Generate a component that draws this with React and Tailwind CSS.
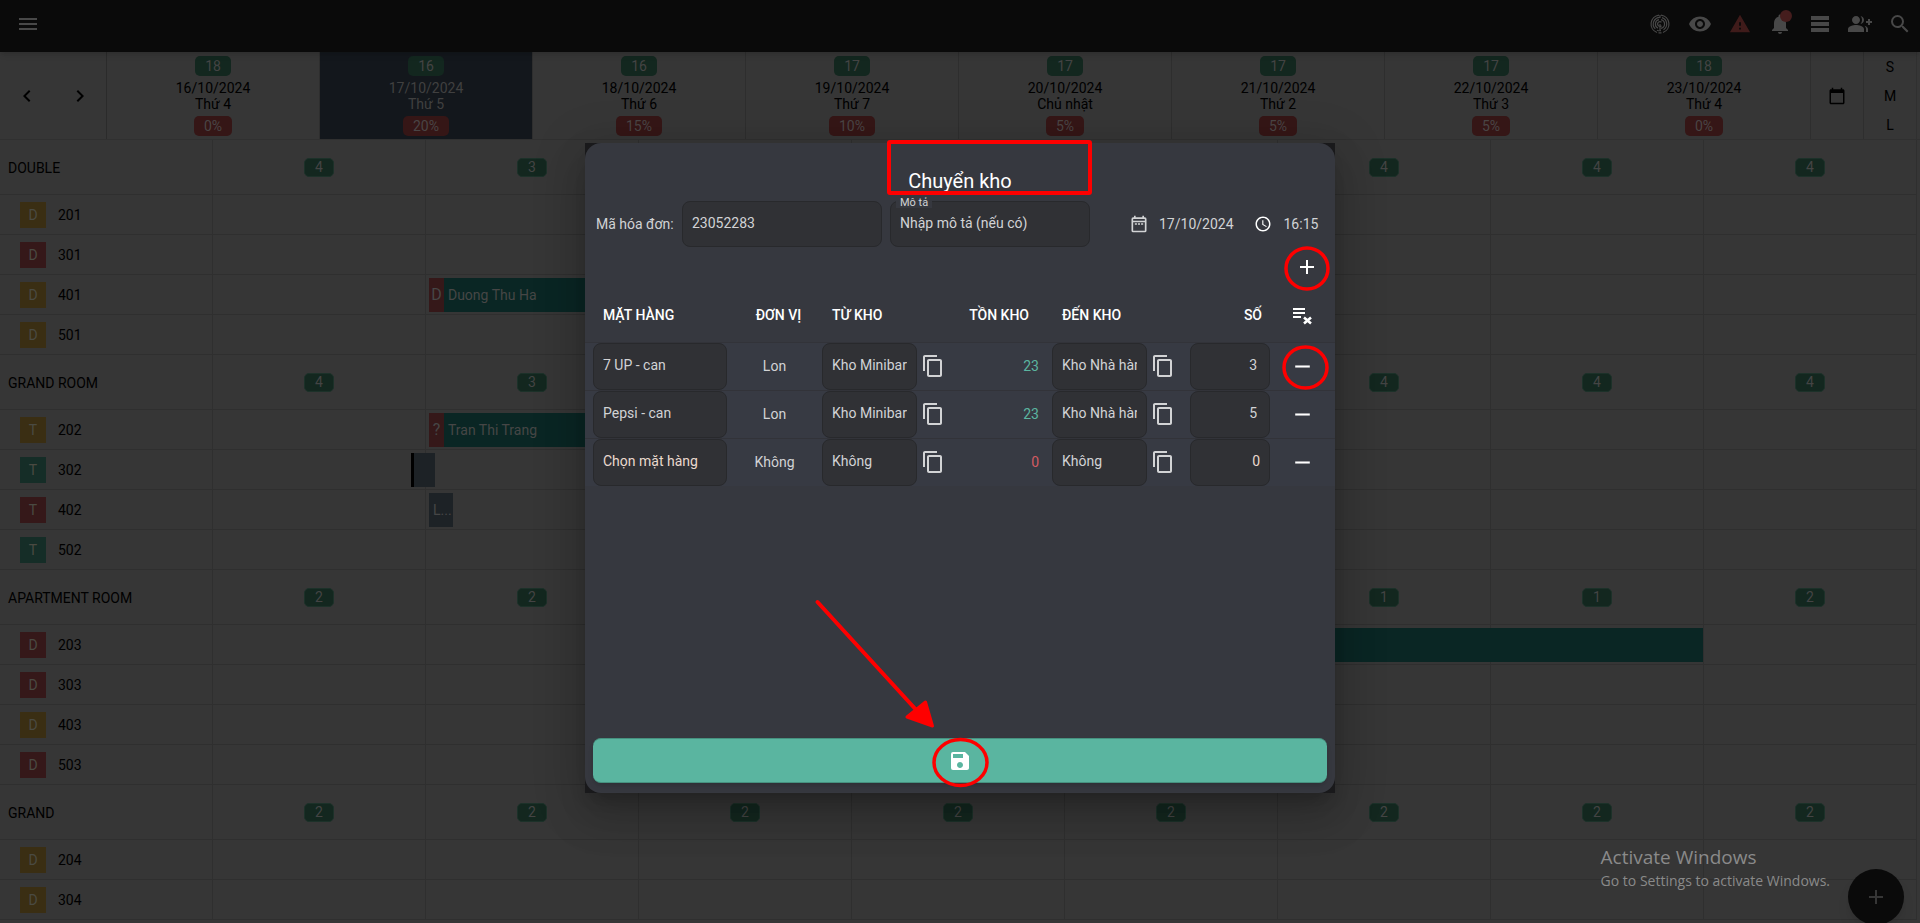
import { useState } from 'react';
import {
  MdAccessTime,
  MdAdd,
  MdCalendarToday,
  MdChevronLeft,
  MdChevronRight,
  MdContentCopy,
  MdGroupAdd,
  MdMenu,
  MdNotifications,
  MdRemove,
  MdSave,
  MdSearch,
  MdVisibility,
  MdWarning
} from 'react-icons/md';

const DAYS = [
  { date: '16/10/2024', name: 'Thứ 4', free: 18, rate: '0%' },
  { date: '17/10/2024', name: 'Thứ 5', free: 16, rate: '20%', today: true },
  { date: '18/10/2024', name: 'Thứ 6', free: 16, rate: '15%' },
  { date: '19/10/2024', name: 'Thứ 7', free: 17, rate: '10%' },
  { date: '20/10/2024', name: 'Chủ nhật', free: 17, rate: '5%' },
  { date: '21/10/2024', name: 'Thứ 2', free: 17, rate: '5%' },
  { date: '22/10/2024', name: 'Thứ 3', free: 17, rate: '5%' },
  { date: '23/10/2024', name: 'Thứ 4', free: 18, rate: '0%' }
];

// start / end are counted in days from the first column
const GROUPS = [
  {
    name: 'DOUBLE',
    free: [4, 3, null, null, null, 4, 4, 4],
    rooms: [
      { no: '201', tag: 'D', color: 'yellow' },
      { no: '301', tag: 'D', color: 'red' },
      { no: '401', tag: 'D', color: 'yellow', booking: { kind: 'stay', tag: 'D', guest: 'Duong Thu Ha', start: 1.014, end: 2.5 } },
      { no: '501', tag: 'D', color: 'yellow' }
    ]
  },
  {
    name: 'GRAND ROOM',
    free: [4, 3, null, null, null, 4, 4, 4],
    rooms: [
      { no: '202', tag: 'T', color: 'yellow', booking: { kind: 'stay', tag: '?', guest: 'Tran Thi Trang', start: 1.014, end: 2.5 } },
      { no: '302', tag: 'T', color: 'green', booking: { kind: 'late', start: 0.93, end: 1.042 } },
      { no: '402', tag: 'T', color: 'red', booking: { kind: 'done', guest: 'L...', start: 1.014, end: 1.127 } },
      { no: '502', tag: 'T', color: 'green' }
    ]
  },
  {
    name: 'APARTMENT ROOM',
    free: [2, 2, null, null, null, 1, 1, 2],
    rooms: [
      { no: '203', tag: 'D', color: 'red', booking: { kind: 'stay', start: 3, end: 6.995 } },
      { no: '303', tag: 'D', color: 'red' },
      { no: '403', tag: 'D', color: 'yellow' },
      { no: '503', tag: 'D', color: 'red' }
    ]
  },
  {
    name: 'GRAND',
    free: [2, 2, 2, 2, 2, 2, 2, 2],
    rooms: [
      { no: '204', tag: 'D', color: 'yellow' },
      { no: '304', tag: 'D', color: 'yellow' }
    ]
  }
];

const TAG_COLORS = {
  yellow: 'bg-[#3a2e13]',
  red: 'bg-[#351819]',
  green: 'bg-[#152d27]'
};

const BOOKING_COLORS = {
  stay: 'bg-[#0a2624]',
  late: 'bg-[#1d2226] border-l-3 border-black',
  done: 'bg-[#1d2226]'
};

function FingerprintIcon() {
  return (
    <svg viewBox="0 0 24 24" className="h-6 w-6" fill="none" stroke="currentColor" strokeWidth="1.2">
      <path d="M11 3.100a9 9 0 0 0-2 17.400M13 3.100a9 9 0 0 1 2 17.400M10.500 20.900h3" />
      <path d="M12 5.300a6.700 6.700 0 0 0-4.700 11.500M14 5.600a6.700 6.700 0 0 1 1.500 12.100M9 18.200a6.700 6.700 0 0 0 4 .4" />
      <path d="M11 7.600a4.500 4.500 0 0 0-1 8.500M13 7.600a4.500 4.500 0 0 1 0 8.800" />
      <path d="M13.500 10.300a2.300 2.300 0 1 0 0 3.400M12 3v3M12 12v6.500" />
    </svg>
  );
}

function ViewListIcon() {
  return (
    <svg viewBox="0 0 24 24" className="h-6 w-6" fill="currentColor">
      <path d="M3 4h18v4H3zM3 10h18v4H3zM3 16h18v4H3z" />
    </svg>
  );
}

function CalendarIcon() {
  return (
    <svg viewBox="0 0 24 24" className="h-5 w-5 shrink-0" fill="currentColor">
      <path d="M19 4h-1V2h-2v2H8V2H6v2H5a2 2 0 0 0-2 2v14a2 2 0 0 0 2 2h14a2 2 0 0 0 2-2V6a2 2 0 0 0-2-2zm0 16H5V10h14v10zm0-12H5V6h14v2zM7 11h2.500v2H7zM10.700 11h2.500v2h-2.500zM14.500 11H17v2h-2.500z" />
    </svg>
  );
}

function ClearListIcon() {
  return (
    <svg viewBox="0 0 24 24" className="h-6 w-6" fill="none" stroke="currentColor" strokeWidth="2">
      <path d="M3 6h12M3 10h12M3 14h8" />
      <path d="M14 14.500l7 6M21 14.500l-7 6" strokeWidth="2.600" />
    </svg>
  );
}

function TopBar() {
  return (
    <header className="relative z-10 flex h-13 items-center justify-between bg-[#0a0a0a] pr-2 pb-1 pl-4 text-[#484848] shadow-md">
      <button aria-label="Menu">
        <MdMenu size={24} />
      </button>
      <div className="flex items-center gap-4">
        <button aria-label="Vân tay"><FingerprintIcon /></button>
        <button aria-label="Xem"><MdVisibility size={24} /></button>
        <button aria-label="Cảnh báo" className="text-[#3f1b1a]"><MdWarning size={22} className="mx-px" /></button>
        <button aria-label="Thông báo" className="relative">
          <MdNotifications size={24} />
          <span className="absolute -top-0.5 right-0 h-3 w-3 rounded-full bg-[#451d1d]" />
        </button>
        <button aria-label="Danh sách"><ViewListIcon /></button>
        <button aria-label="Thêm khách"><MdGroupAdd size={24} /></button>
        <button aria-label="Tìm kiếm"><MdSearch size={24} /></button>
      </div>
    </header>
  );
}

function DateHeader() {
  return (
    <div className="flex border-b border-[#303030] pr-[3px]">
      <div className="flex w-[107px] shrink-0 items-center justify-around border-r border-[#2b2b2b] text-black">
        <button aria-label="Ngày trước"><MdChevronLeft size={24} /></button>
        <button aria-label="Ngày sau"><MdChevronRight size={24} /></button>
      </div>
      {DAYS.map(day => (
        <div
          key={day.date}
          className={`flex min-w-0 flex-1 flex-col items-center border-r border-[#2e2e2e] pt-1 pb-[3px] leading-4 ${
            day.today ? 'bg-[#13171c] text-[#404040]' : 'text-black'
          }`}
        >
          <span className="rounded-[5px] bg-[#13271f] px-2.5 leading-5 text-[#444]">{day.free}</span>
          <span className="mt-1">{day.date}</span>
          <span>{day.name}</span>
          <span className="mt-1 rounded-[5px] bg-[#351616] px-2.5 leading-5 text-[#4a4545]">{day.rate}</span>
        </div>
      ))}
      <button aria-label="Chọn ngày" className="flex w-[53px] shrink-0 items-center justify-center border-r border-[#2e2e2e] text-black">
        <MdCalendarToday size={18} />
      </button>
      <div className="flex w-[53px] shrink-0 flex-col items-center justify-around border-r border-[#303030] text-black">
        <button>S</button>
        <button>M</button>
        <button>L</button>
      </div>
    </div>
  );
}

function Booking({ booking }) {
  const { kind, tag, guest, start, end } = booking;
  return (
    <div
      className={`absolute top-[3px] flex h-[34px] items-center overflow-hidden whitespace-nowrap text-[#464646] ${BOOKING_COLORS[kind]}`}
      style={{ left: `${(start / 8) * 100}%`, width: `${((end - start) / 8) * 100}%` }}
    >
      {tag && <span className="flex h-full w-[15px] items-center justify-center bg-[#351819] text-base">{tag}</span>}
      {guest && <span className="pl-1">{guest}</span>}
    </div>
  );
}

function RoomRow({ room }) {
  return (
    <div className="flex h-10 pr-[3px]">
      <div className="flex w-[213px] shrink-0 items-center gap-3 border-r border-b border-[#2f2f2f] pl-5 text-black">
        <span className={`flex h-[26px] w-[26px] items-center justify-center text-[#4a4a42] ${TAG_COLORS[room.color]}`}>
          {room.tag}
        </span>
        {room.no}
      </div>
      <div className="relative flex flex-1">
        {DAYS.map(day => (
          <div key={day.date} className="flex-1 border-r border-b border-[#2f2f2f]" />
        ))}
        {room.booking && <Booking booking={room.booking} />}
      </div>
    </div>
  );
}

function GroupRow({ group }) {
  return (
    <div className="flex h-[55px] pr-[3px]">
      <div className="flex w-[213px] shrink-0 items-center border-r border-b border-[#2f2f2f] pt-0.5 pl-2 text-black">{group.name}</div>
      {group.free.map((count, i) => (
        <div key={i} className="flex flex-1 items-center justify-center border-r border-b border-[#2f2f2f]">
          {count && (
            <span className="rounded-[5px] border border-[#1c3129] bg-[#13271f] px-2.5 leading-[17px] text-[#444]">{count}</span>
          )}
        </div>
      ))}
    </div>
  );
}

function Field({ className = '', ...props }) {
  return (
    <input
      className={`rounded-lg border border-[#28292c] bg-[#303135] px-[9px] pb-0.5 text-sm outline-none placeholder:opacity-100 ${className}`}
      {...props}
    />
  );
}

function ItemRow({ item, onRemove }) {
  return (
    <tr className="h-12 border-t border-[#323339] bg-[#373a43]">
      <td className="p-0 pl-2">
        <Field
          aria-label="Mặt hàng"
          className="block h-[47px] w-[134px] placeholder:text-[#ead9ce]"
          defaultValue={item.name}
          placeholder="Chọn mặt hàng"
        />
      </td>
      <td className="p-0 text-center">{item.unit}</td>
      <td className="p-0 pl-2">
        <div className="flex items-center gap-1">
          <Field aria-label="Từ kho" className="h-[47px] w-[95px]" defaultValue={item.from} />
          <button aria-label="Sao chép từ kho"><MdContentCopy size={24} /></button>
        </div>
      </td>
      <td className={`p-0 pr-[5px] text-right ${item.stock > 0 ? 'text-[#5bb5a0]' : 'text-[#d35a62]'}`}>{item.stock}</td>
      <td className="p-0 pl-2">
        <div className="flex items-center gap-1">
          <Field aria-label="Đến kho" className="h-[47px] w-[95px]" defaultValue={item.to} />
          <button aria-label="Sao chép đến kho"><MdContentCopy size={24} /></button>
        </div>
      </td>
      <td className="p-0 px-2">
        <Field
          aria-label="Số lượng"
          className={`block h-[47px] w-full text-right ${item.qty ? 'pr-3' : 'text-[#ead9ce]'}`}
          defaultValue={item.qty}
        />
      </td>
      <td className="p-0 pl-3 text-white">
        <button aria-label="Xóa dòng" className="block" onClick={onRemove}><MdRemove size={25} /></button>
      </td>
    </tr>
  );
}

// Red guide marks drawn over the dialog
function GuideMarks() {
  return (
    <svg
      viewBox="0 0 750 650"
      className="pointer-events-none absolute top-0 left-0 h-[650px] w-[750px] overflow-visible"
      fill="none"
      stroke="#fe0000"
      strokeWidth="4"
    >
      <rect x="304" y="-1" width="201" height="51" rx="1" />
      <ellipse cx="722" cy="125.500" rx="21" ry="20.500" strokeWidth="3.500" />
      <ellipse cx="720.500" cy="224.500" rx="21.500" ry="20.500" strokeWidth="3.500" />
      <ellipse cx="375.500" cy="619.500" rx="26.500" ry="23" strokeWidth="3.500" />
      <path d="M232.500 459L334 570" strokeLinecap="round" />
      <path d="M340.500 559L347.500 583L322 574Z" fill="#fe0000" strokeWidth="3" strokeLinejoin="round" />
    </svg>
  );
}

function TransferDialog() {
  const [items, setItems] = useState([
    { id: 1, name: '7 UP - can', unit: 'Lon', from: 'Kho Minibar', stock: 23, to: 'Kho Nhà hàng', qty: 3 },
    { id: 2, name: 'Pepsi - can', unit: 'Lon', from: 'Kho Minibar', stock: 23, to: 'Kho Nhà hàng', qty: 5 },
    { id: 3, name: '', unit: 'Không', from: 'Không', stock: 0, to: 'Không', qty: 0 }
  ]);

  const addItem = () => {
    setItems([...items, { id: Date.now(), name: '', unit: 'Không', from: 'Không', stock: 0, to: 'Không', qty: 0 }]);
  };

  const removeItem = (id) => {
    setItems(items.filter(item => item.id !== id));
  };

  return (
    <div className="relative w-[750px] bg-[#19191b] shadow-[0_11px_15px_-7px_rgba(0,0,0,0.2),0_24px_38px_3px_rgba(0,0,0,0.14),0_9px_46px_8px_rgba(0,0,0,0.12)]">
      <div role="dialog" aria-label="Chuyển kho" className="flex min-h-[650px] flex-col rounded-2xl bg-[#36383f] pt-6 text-[#d2d3d5]">
        <h2 className="text-center text-xl leading-7 font-normal text-white">Chuyển kho</h2>

        <div className="mt-1.5 flex items-center pl-[11px]">
          <label htmlFor="invoice" className="w-[86px]">Mã hóa đơn:</label>
          <Field id="invoice" className="h-[46px] w-[200px]" defaultValue="23052283" />
          <div className="relative ml-2">
            <label htmlFor="note" className="absolute -top-1 left-1.5 bg-[#36383f] px-1 text-[11px] leading-[11px]">Mô tả</label>
            <Field id="note" className="h-[46px] w-[200px] placeholder:text-[#d2d3d5]" placeholder="Nhập mô tả (nếu có)" />
          </div>
          <button className="ml-[39px] flex items-center gap-2.5">
            <CalendarIcon />
            17/10/2024
          </button>
          <button className="ml-5 flex items-center gap-3 whitespace-nowrap">
            <MdAccessTime size={18} className="text-white" />
            16:15
          </button>
        </div>

        <div className="mt-2 flex justify-end pr-4 text-white">
          <button aria-label="Thêm dòng" onClick={addItem}><MdAdd size={24} /></button>
        </div>

        <table className="mt-2 w-full table-fixed border-collapse">
          <thead>
            <tr className="h-[55px] text-white">
              <th className="w-[150px] p-0 pt-0.5 pl-[18px] text-left font-medium">MẶT HÀNG</th>
              <th className="w-[79px] p-0 pt-0.5 pl-2 text-center font-medium">ĐƠN VỊ</th>
              <th className="w-[135px] p-0 pt-0.5 pl-[18px] text-left font-medium">TỪ KHO</th>
              <th className="w-[95px] p-0 pt-0.5 pr-[15px] text-right font-medium">TỒN KHO</th>
              <th className="w-[138px] p-0 pt-0.5 pl-[18px] text-left font-medium">ĐẾN KHO</th>
              <th className="w-[96px] p-0 pt-0.5 pr-4 text-right font-medium">SỐ</th>
              <th className="w-[57px] p-0 pt-0.5 pl-3">
                <button aria-label="Xóa tất cả" className="block" onClick={() => setItems([])}><ClearListIcon /></button>
              </th>
            </tr>
          </thead>
          <tbody>
            {items.map(item => (
              <ItemRow key={item.id} item={item} onRemove={() => removeItem(item.id)} />
            ))}
          </tbody>
        </table>

        <div className="mt-auto px-2 pb-2.5">
          <button
            aria-label="Lưu"
            className="flex h-[45px] w-full items-center justify-center rounded-lg border-y border-[#46917f] bg-[#5ab5a0] text-white shadow-md"
          >
            <MdSave size={24} />
          </button>
        </div>
      </div>
      <GuideMarks />
    </div>
  );
}

export default function App() {
  return (
    <div className="relative h-screen overflow-hidden bg-[#363636] font-[Roboto,sans-serif] text-sm">
      <TopBar />
      <DateHeader />
      {GROUPS.map(group => (
        <section key={group.name}>
          <GroupRow group={group} />
          {group.rooms.map(room => (
            <RoomRow key={room.no} room={room} />
          ))}
        </section>
      ))}

      <button
        aria-label="Thêm"
        className="absolute right-4 -bottom-0.5 flex h-14 w-14 items-center justify-center rounded-full bg-[#0a0a0a] text-[#363636] shadow-lg"
      >
        <MdAdd size={24} />
      </button>

      <div className="absolute inset-0 z-20 flex items-start justify-center pt-[143px]">
        <TransferDialog />
      </div>

      <div className="absolute right-[90px] bottom-[30px] z-30 font-['Open_Sans',sans-serif] text-[#8a8a8a]">
        <p className="text-[19px] leading-6">Activate Windows</p>
        <p className="text-sm leading-6">Go to Settings to activate Windows.</p>
      </div>
    </div>
  );
}
